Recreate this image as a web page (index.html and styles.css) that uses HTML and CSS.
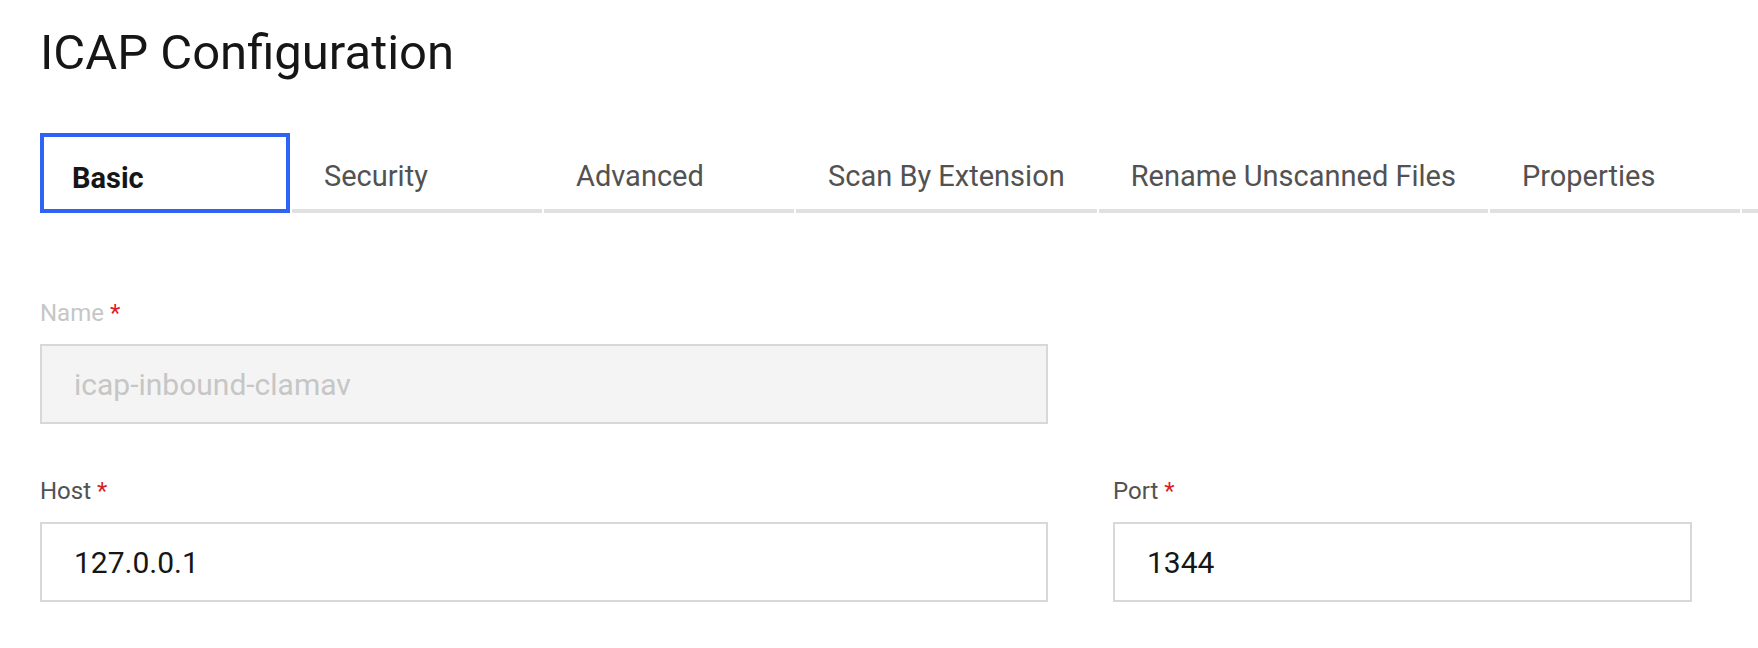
FILE: index.html
```html
<!DOCTYPE html>
<html lang="en">
<head>
<meta charset="utf-8">
<title>ICAP Configuration</title>
<link rel="stylesheet" href="styles.css">
</head>
<body>
<main class="page">
  <h1 class="title">ICAP Configuration</h1>
  <nav class="tabs">
    <div class="tab tab-active">Basic</div>
    <div class="tab">Security</div>
    <div class="tab">Advanced</div>
    <div class="tab">Scan By Extension</div>
    <div class="tab">Rename Unscanned Files</div>
    <div class="tab">Properties</div>
    <div class="tab-fill"></div>
  </nav>
  <section class="form">
    <div class="row">
      <div class="field field-wide">
        <label class="label label-disabled">Name <span class="req">*</span></label>
        <div class="input input-disabled">icap-inbound-clamav</div>
      </div>
    </div>
    <div class="row">
      <div class="field field-wide">
        <label class="label">Host <span class="req">*</span></label>
        <div class="input">127.0.0.1</div>
      </div>
      <div class="field field-port">
        <label class="label">Port <span class="req">*</span></label>
        <div class="input">1344</div>
      </div>
    </div>
  </section>
</main>
</body>
</html>
```

FILE: styles.css
```css
html, body {
  margin: 0;
  padding: 0;
  background: #ffffff;
}

body {
  font-family: Roboto, "Noto Sans", "Liberation Sans", sans-serif;
  color: #161616;
  overflow: hidden;
}

.page {
  padding-left: 40px;
}

.title {
  margin: 20px 0 0 0;
  font-size: 49px;
  line-height: 65px;
  font-weight: 400;
  color: #161616;
}

.tabs {
  display: flex;
  gap: 2px;
  margin-top: 48px;
}

.tab {
  box-sizing: border-box;
  min-width: 250px;
  height: 80px;
  padding: 9px 32px 0 32px;
  display: flex;
  align-items: center;
  font-size: 29px;
  color: #525252;
  border-bottom: 4px solid #e0e0e0;
  white-space: nowrap;
}

.tab-active {
  border: 4px solid #2f63f3;
  color: #161616;
  font-weight: 700;
  padding: 9px 28px 0 28px;
}

.tab-fill {
  flex: 1;
  border-bottom: 4px solid #e0e0e0;
}

.form {
  margin-top: 84px;
  display: flex;
  flex-direction: column;
  gap: 51px;
}

.row {
  display: flex;
  gap: 65px;
}

.field {
  display: flex;
  flex-direction: column;
  gap: 15px;
}

.field-wide {
  width: 1008px;
}

.field-port {
  width: 579px;
}

.label {
  font-size: 24px;
  line-height: 32px;
  color: #525252;
}

.label-disabled {
  color: #c6c6c6;
}

.req {
  color: #da1e28;
}

.input {
  box-sizing: border-box;
  height: 80px;
  border: 2px solid #d8d8d8;
  padding: 0 32px;
  display: flex;
  align-items: center;
  font-size: 30px;
  color: #161616;
  background: #ffffff;
}

.input-disabled {
  background: #f4f4f4;
  color: #c6c6c6;
}
```
